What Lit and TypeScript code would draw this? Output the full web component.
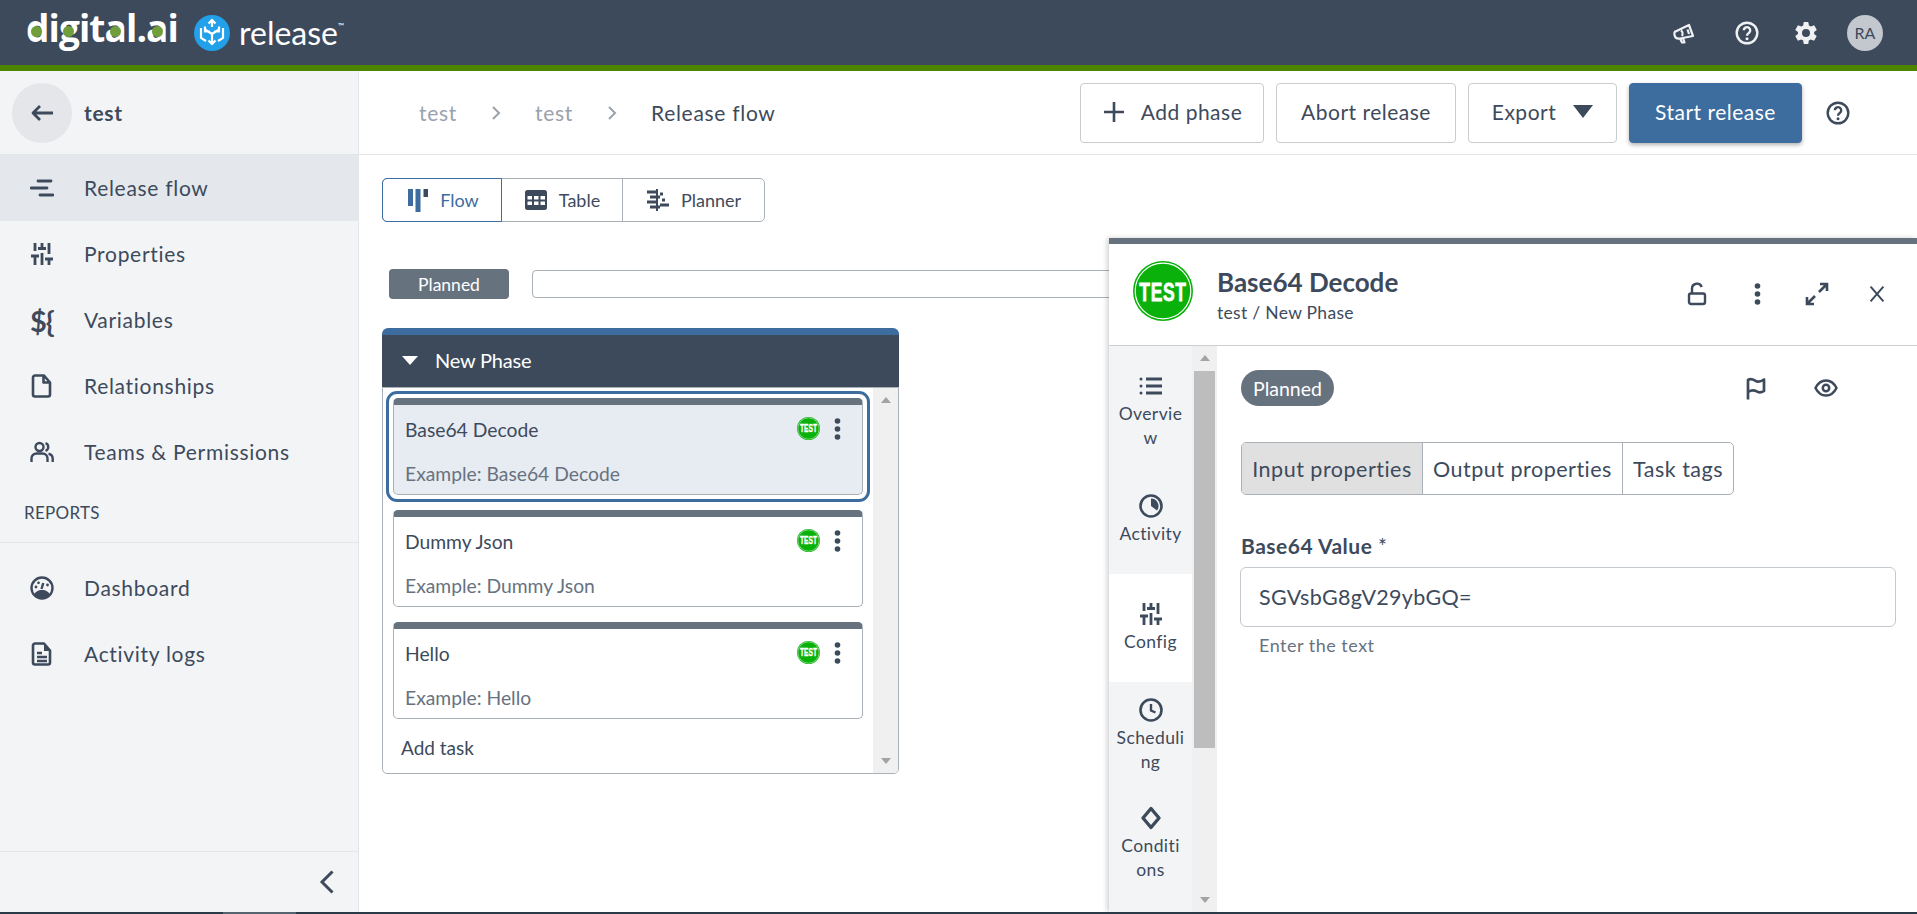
import { LitElement, html, css, svg } from "lit";
import { customElement } from "lit/decorators.js";

const icon = (body: unknown, size = 24) => html`<svg class="ic" width=${size} height=${size} viewBox="0 0 24 24">${body}</svg>`;

const sliders = svg`<path d="M5 1v8M5 14v9M12 1v5M12 11v12M19 1v11M19 17v6M1 14h8M8 6.500h8M15 17h8" fill="none" stroke="currentColor" stroke-width="2.800"/>`;
const clockFace = svg`<circle cx="12" cy="12" r="10.500" fill="none" stroke="currentColor" stroke-width="2.600"/>`;

const icons: Record<string, unknown> = {
  flow: svg`<path d="M8 5h13M1 12h16M10 19h13" fill="none" stroke="currentColor" stroke-width="2.800" stroke-linecap="round"/>`,
  sliders,
  file: svg`<path d="M5 1.500h9l6 7v12a2 2 0 0 1-2 2H5a2 2 0 0 1-2-2v-17a2 2 0 0 1 2-2zM13.500 2v6.500H20" fill="none" stroke="currentColor" stroke-width="2.600" stroke-linejoin="round"/>`,
  team: svg`<circle cx="9.500" cy="7" r="4" fill="none" stroke="currentColor" stroke-width="2.400"/><path d="M1.500 22v-3.500a5 5 0 0 1 5-5h6a5 5 0 0 1 5 5V22M15.500 3.200a4 4 0 0 1 0 7.600M18.500 13.700a5 5 0 0 1 4.200 4.800V22" fill="none" stroke="currentColor" stroke-width="2.400"/>`,
  gauge: svg`<circle cx="12" cy="12" r="10.500" fill="none" stroke="currentColor" stroke-width="2.400"/><path d="M4 19c1-3 4-5 8-5s7 2 8 5l-3 3H7z" fill="currentColor"/><path d="M11.500 13l1.800-6" stroke="currentColor" stroke-width="2.400"/><circle cx="6" cy="11" r="1.400" fill="currentColor"/><circle cx="8.500" cy="6.800" r="1.400" fill="currentColor"/><circle cx="17.500" cy="9" r="1.400" fill="currentColor"/>`,
  log: svg`<path d="M5 1.500h9l6 7v12a2 2 0 0 1-2 2H5a2 2 0 0 1-2-2v-17a2 2 0 0 1 2-2z" fill="none" stroke="currentColor" stroke-width="2.600" stroke-linejoin="round"/><path d="M7 11h5M7 15h10M7 19h10" stroke="currentColor" stroke-width="2.400"/><path d="M14 2l6 7h-6z" fill="currentColor"/>`,
  help: svg`<circle cx="12" cy="12" r="10.300" fill="none" stroke="currentColor" stroke-width="2.400"/><path d="M8.800 9.300a3.200 3.200 0 1 1 5 2.700c-1.200.8-1.800 1.300-1.800 2.700" fill="none" stroke="currentColor" stroke-width="2.400"/><circle cx="12" cy="17.800" r="1.500" fill="currentColor"/>`,
  gear: svg`<path fill="currentColor" fill-rule="evenodd" d="M20.100 13c.1-.3.100-.7.100-1s0-.7-.1-1l2.400-1.800c.2-.2.300-.5.100-.7l-2.300-3.900c-.1-.2-.4-.3-.7-.2l-2.800 1.100c-.6-.4-1.200-.8-1.900-1L14.400 1.500c0-.3-.3-.5-.5-.5h-3.800c-.3 0-.5.200-.5.500l-.4 3c-.7.200-1.300.6-1.900 1L4.500 4.400c-.3-.1-.5 0-.7.200L1.500 8.500c-.1.200-.1.500.1.700L4 11c-.1.300-.1.700-.1 1s0 .7.100 1l-2.400 1.800c-.2.200-.3.500-.1.700l2.300 3.900c.1.200.4.300.7.200l2.800-1.100c.6.400 1.200.8 1.900 1l.4 3c0 .3.200.5.500.5h3.800c.3 0 .5-.2.500-.5l.4-3c.7-.2 1.300-.6 1.900-1l2.800 1.100c.3.100.5 0 .7-.2l2.300-3.900c.1-.2.100-.5-.1-.7zM12 16a4 4 0 1 1 0-8 4 4 0 0 1 0 8z"/>`,
  horn: svg`<path d="M3.500 10.500L17 4l4 11-13 2.500c-3 .5-5-1-5.500-3.500-.3-1.500 0-2.800.5-3.500z M8 17.500l2 4h2.500l-1.500-4.500 M15.500 8.500l1.500 4.500M9 9.500c1.500 1 2 3.500 1 5.500" fill="none" stroke="currentColor" stroke-width="2.200" stroke-linejoin="round"/>`,
  plus: svg`<path d="M12 2v20M2 12h20" stroke="currentColor" stroke-width="2.600"/>`,
  lock: svg`<path d="M7 12V6.500a5 5 0 0 1 9.700-1.500" fill="none" stroke="currentColor" stroke-width="2.400"/><rect x="4" y="11.500" width="16" height="10.500" rx="2" fill="none" stroke="currentColor" stroke-width="2.400"/>`,
  expand: svg`<path d="M14 10l8-8M15 2h7v7M10 14l-8 8M2 15v7h7" fill="none" stroke="currentColor" stroke-width="2.600"/>`,
  close: svg`<path d="M5 4l14 16M19 4L5 20" stroke="currentColor" stroke-width="2.200"/>`,
  flag: svg`<path d="M4 23.500V4c4-2.500 7 1 9 1.500 2 .5 4 0 7-2V15c-3 2-6 1.500-8 0-3-1.500-5-1-8 1" fill="none" stroke="currentColor" stroke-width="2.700" stroke-linejoin="round"/>`,
  eye: svg`<path d="M1.500 12c2.500-5 6-7.500 10.500-7.500S20 7 22.500 12c-2.500 5-6 7.500-10.500 7.500S4 17 1.500 12z" fill="none" stroke="currentColor" stroke-width="2.500"/><circle cx="12" cy="12" r="3.200" fill="none" stroke="currentColor" stroke-width="2.500"/>`,
  list: svg`<path d="M7 5h16M7 12h16M7 19h16" stroke="currentColor" stroke-width="2.800"/><circle cx="2" cy="5" r="1.500" fill="currentColor"/><circle cx="2" cy="12" r="1.500" fill="currentColor"/><circle cx="2" cy="19" r="1.500" fill="currentColor"/>`,
  activity: svg`${clockFace}<path d="M12 4.500a7.500 7.500 0 0 1 6 12L12 12z" fill="currentColor"/>`,
  clock: svg`${clockFace}<path d="M12 6v6.500l4.500 2" fill="none" stroke="currentColor" stroke-width="2.400"/>`,
  diamond: svg`<path d="M12 2.500L20 12l-8 9.500L4 12z" fill="none" stroke="currentColor" stroke-width="3.400" stroke-linejoin="round"/>`,
  table: svg`<rect x="1" y="2" width="22" height="20" rx="2.500" fill="currentColor"/><path d="M3.500 8h4.500v3.500H3.500zM10 8h4.500v3.500H10zM16.500 8h4.500v3.500h-4.500zM3.500 13.500h4.500V17H3.500zM10 13.500h4.500V17H10zM16.500 13.500h4.500V17h-4.500z" fill="#fff"/>`,
  planner: svg`<path d="M11 1v22" stroke="currentColor" stroke-width="2"/><path d="M1 4h10M4 9h10M1 14h10M4 19h10M14 6h3M16 12h3M14 17h9" stroke="currentColor" stroke-width="2.800"/>`,
  columns: svg`<path d="M3 1h5v17H3zM10.500 1h5v23h-5z" fill="#3d6c9e"/><path d="M18.500 1H23v8h-4.500z" fill="#3d4a5c"/>`,
  back: svg`<path d="M23 12H3M10 5l-7 7 7 7" fill="none" stroke="currentColor" stroke-width="2.800" stroke-linejoin="round"/>`,
  chevron: svg`<path d="M17.500 1.500L7 12l10.500 10.500" fill="none" stroke="currentColor" stroke-width="3"/>`,
};

const dots = html`<svg class="ic" width="7" height="22" viewBox="0 0 7 22"><circle cx="3.500" cy="3" r="2.800" fill="currentColor"/><circle cx="3.500" cy="11" r="2.800" fill="currentColor"/><circle cx="3.500" cy="19" r="2.800" fill="currentColor"/></svg>`;

const crumbArrow = html`<svg class="ic" width="10" height="16" viewBox="0 0 10 16"><path d="M2 2l6 6-6 6" fill="none" stroke="#9aa2ac" stroke-width="2"/></svg>`;

const testBadge = (size: number) => html`<svg class="ic" width=${size} height=${size} viewBox="0 0 60 60">
  <circle cx="30" cy="30" r="30" fill="#0bb10b"/>
  <circle cx="30" cy="30" r="27.800" fill="none" stroke="#fff" stroke-width="1.200"/>
  <text transform="translate(30 39.500) scale(1 1.520)" text-anchor="middle" font-family="Liberation Sans" font-weight="700" font-size="17.500" fill="#fff" stroke="#fff" stroke-width="0.500">TEST</text>
</svg>`;

// letter, and where the green dot sits in its bowl (percent of the glyph width)
const logoLetters: [string, number?][] = [
  ["d", 45], ["i"], ["g", 47], ["i"], ["t"], ["a", 52], ["l"], ["."], ["a", 52], ["i"],
];

const mainNav = [
  { label: "Release flow", icon: "flow", active: true },
  { label: "Properties", icon: "sliders" },
  { label: "Variables", glyph: "\${" },
  { label: "Relationships", icon: "file" },
  { label: "Teams & Permissions", icon: "team" },
];
const reportNav = [
  { label: "Dashboard", icon: "gauge" },
  { label: "Activity logs", icon: "log" },
];
const tasks = [
  { name: "Base64 Decode", selected: true },
  { name: "Dummy Json" },
  { name: "Hello" },
];
// the narrow rail splits long words, the breaks are where the app puts them
const panelTabs = [
  { label: "Overvie\nw", icon: "list" },
  { label: "Activity", icon: "activity" },
  { label: "Config", icon: "sliders", active: true },
  { label: "Scheduli\nng", icon: "clock" },
  { label: "Conditi\nons", icon: "diamond" },
];

@customElement("app-root")
export class AppRoot extends LitElement {
  static styles = css`
    :host {
      --ink: #3d4a5c;
      --muted: #67727f;
      --line: #e3e5e8;
      --edge: #aab0b8;
      --blue: #3d6c9e;
      display: block;
      position: relative;
      width: 100%;
      height: 914px;
      overflow: hidden;
      background: #fff;
      color: var(--ink);
      font-family: Lato, sans-serif;
      font-size: 21px;
      letter-spacing: 0.7px;
    }
    .ic { display: block; flex: none; }

    .top {
      box-sizing: border-box;
      height: 71px;
      border-bottom: 6px solid #4e8500;
      background: var(--ink);
      color: #fff;
      display: flex;
      align-items: center;
      padding: 0 34px 0 26px;
    }
    .brand { align-self: flex-start; flex: none; width: 168px; font-family: "Open Sans", sans-serif; font-size: 37px; font-weight: 700; letter-spacing: -0.9px; line-height: 55px; white-space: nowrap; }
    .brand span { position: relative; display: inline-block; }
    .brand i { position: absolute; top: 26px; width: 11px; height: 11px; margin-left: -5.500px; border-radius: 50%; background: #6f9e3a; }
    .product { font-size: 32px; margin-left: 9px; letter-spacing: 0; }
    .tm { font-size: 8px; vertical-align: 16px; }
    .top-icons { margin-left: auto; display: flex; align-items: center; color: #f0f1f3; }
    .top-help { margin-left: 39px; }
    .top-gear { margin-left: 35px; }
    .avatar { width: 36px; height: 36px; margin-left: 29px; border-radius: 50%; background: #c3c7ce; color: var(--ink); font-size: 16px; letter-spacing: 0; display: flex; align-items: center; justify-content: center; }

    .page { display: flex; height: 843px; }
    .side {
      flex: none;
      box-sizing: border-box;
      width: 359px;
      border-right: 1px solid var(--line);
      background: #f3f4f6;
      display: flex;
      flex-direction: column;
    }
    .back { height: 83px; border-bottom: 1px solid var(--line); display: flex; align-items: center; padding-left: 12px; gap: 12px; font-weight: 700; }
    .circle { width: 60px; height: 60px; border-radius: 50%; background: #e5e6ea; display: flex; align-items: center; justify-content: center; }
    .row { height: 66px; display: flex; align-items: center; gap: 30px; padding-left: 30px; }
    .row span { margin-top: -2px; }
    .row.active { background: #e4e8ec; }
    .glyph { width: 24px; font-weight: 700; font-size: 29px; letter-spacing: -1px; white-space: nowrap; }
    .section { box-sizing: border-box; height: 58px; padding-left: 24px; padding-top: 17px; margin-bottom: 12px; border-bottom: 1px solid var(--line); font-size: 17px; letter-spacing: 0.3px; }
    .collapse { box-sizing: border-box; margin-top: auto; height: 63px; padding: 0 19px 3px 0; border-top: 1px solid var(--line); display: flex; align-items: center; justify-content: flex-end; }

    main { flex: 1; min-width: 0; }
    .bar { box-sizing: border-box; height: 84px; border-bottom: 1px solid var(--line); display: flex; align-items: center; padding: 0 67px 0 60px; }
    .crumb { display: flex; align-items: center; gap: 34px; }
    .crumb span { color: #9aa2ac; }
    .crumb b { font-weight: 400; }
    .actions { margin-left: auto; display: flex; align-items: center; gap: 12px; }
    .btn { box-sizing: border-box; height: 60px; padding-bottom: 2px; border: 1px solid #c9ccd1; border-radius: 4px; background: #fff; display: flex; align-items: center; justify-content: center; letter-spacing: 0.5px; }
    .btn.add { width: 184px; gap: 15px; }
    .btn.abort { width: 180px; }
    .btn.export { width: 149px; gap: 17px; }
    .btn.start { width: 173px; background: var(--blue); border-color: var(--blue); color: #fff; box-shadow: 0 2px 4px rgba(0, 0, 0, 0.3); }
    .caret { width: 0; height: 0; border: 10px solid transparent; border-top: 13px solid var(--ink); border-bottom: 0; }
    .help { margin-left: 12px; }

    .view { padding: 23px 0 0 23px; }
    .seg { display: flex; width: 383px; height: 44px; box-sizing: border-box; border: 1px solid var(--edge); border-radius: 5px; font-size: 18px; letter-spacing: 0; }
    .seg div { display: flex; align-items: center; justify-content: center; gap: 11px; }
    .seg .flow { width: 120px; margin: -1px 0 -1px -1px; border: 1px solid var(--blue); border-radius: 5px 0 0 5px; color: var(--blue); box-sizing: border-box; }
    .seg .table { width: 120px; }
    .seg .plan { flex: 1; border-left: 1px solid var(--edge); }
    .timeline { display: flex; gap: 23px; margin: 47px 0 0 7px; align-items: center; }
    .pill { flex: none; width: 120px; height: 30px; border-radius: 4px; background: var(--muted); color: #fff; font-size: 17.500px; letter-spacing: 0; display: flex; align-items: center; justify-content: center; }
    .track { flex: 1; box-sizing: border-box; height: 28px; border: 1px solid var(--edge); border-radius: 4px; margin-right: 60px; }

    .phase { width: 517px; margin-top: 29px; letter-spacing: 0; }
    .phase-head { box-sizing: border-box; height: 59px; padding: 0 0 3px 20px; border-top: 7px solid var(--blue); border-radius: 6px 6px 0 0; background: var(--ink); color: #fff; display: flex; align-items: center; gap: 17px; font-size: 20px; letter-spacing: -0.2px; }
    .tri { width: 0; height: 0; margin-top: 2px; border: 8px solid transparent; border-top: 9px solid #fff; border-bottom: 0; }
    .phase-body { box-sizing: border-box; height: 387px; border: 1px solid var(--edge); border-radius: 0 0 5px 5px; display: flex; overflow: hidden; }
    .list { flex: 1; min-width: 0; padding: 3px 3px 0; }
    .sel { border: 3px solid var(--blue); border-radius: 11px; padding: 4px; margin-bottom: 8px; }
    .card { box-sizing: border-box; height: 97px; border: 1px solid var(--edge); border-top: 7px solid var(--muted); border-radius: 5px; background: #fff; padding: 0 11px; margin: 0 7px 15px; }
    .sel .card { margin: 0; background: #e7ebf2; }
    .card-row { height: 48px; display: flex; align-items: center; gap: 14px; font-size: 19.300px; }
    .card-row span { flex: 1; }
    .card-row svg { margin-top: -2px; }
    .dots { margin-right: 10px; padding-top: 1px; }
    .card p { margin: 0; line-height: 42px; color: var(--muted); font-size: 19.300px; }
    .add-task { font-size: 19px; padding: 2px 0 0 15px; }

    .scroll { flex: none; box-sizing: border-box; background: #f0f0f0; display: flex; flex-direction: column; justify-content: space-between; align-items: center; padding: 9px 0; }
    .phase-body .scroll { width: 25px; }
    .up, .down { width: 0; height: 0; border: 5px solid transparent; }
    .up { border-bottom: 6px solid #a3a3a3; border-top: 0; }
    .down { border-top: 6px solid #a3a3a3; border-bottom: 0; }

    .panel {
      position: absolute;
      left: 1109px;
      right: 0;
      top: 238px;
      bottom: 2px;
      border-top: 6px solid var(--muted);
      background: #fff;
      box-shadow: -2px 0 5px rgba(0, 0, 0, 0.18);
      display: flex;
      flex-direction: column;
    }
    .panel-head { flex: none; box-sizing: border-box; height: 102px; border-bottom: 1px solid #ccced2; display: flex; align-items: center; padding: 0 10px 0 24px; }
    .panel-head > svg { margin-top: -8px; }
    .panel-title { margin-left: 24px; }
    .panel-title h1 { margin: 3px 0 0; font-size: 26px; font-weight: 700; line-height: 34px; letter-spacing: 0; }
    .panel-title small { display: block; font-size: 17.500px; line-height: 28px; letter-spacing: 0.3px; }
    .panel-tools { margin: -2px 0 0 auto; display: flex; align-items: center; }
    .panel-tools div { width: 60px; display: flex; justify-content: center; }
    .panel-body { flex: 1; display: flex; min-height: 0; }
    .rail { flex: none; width: 83px; background: #f3f4f6; padding-top: 12px; overflow: hidden; font-size: 17.500px; letter-spacing: 0.4px; }
    .tab { box-sizing: border-box; height: 108px; display: flex; flex-direction: column; align-items: center; justify-content: center; gap: 4px; text-align: center; white-space: pre-line; line-height: 24.500px; }
    .tab.active { background: #fff; }
    .rail-scroll { position: relative; width: 25px; }
    .thumb { position: absolute; left: 2px; right: 2px; top: 25px; height: 377px; background: #bdbdbd; }
    .content { flex: 1; padding: 24px 21px 0 24px; min-width: 0; }
    .status { display: flex; align-items: center; }
    .pillr { box-sizing: border-box; width: 93px; height: 36px; border-radius: 18px; background: var(--muted); color: #fff; font-size: 19.500px; letter-spacing: 0; display: flex; align-items: center; justify-content: center; }
    .flag { margin-left: auto; }
    .eye { margin: 0 58px 0 46px; }
    .tabs { display: inline-flex; height: 53px; margin-top: 36px; box-sizing: border-box; border: 1px solid var(--edge); border-radius: 5px; overflow: hidden; font-size: 21.500px; letter-spacing: 0.5px; }
    .tabs div { box-sizing: border-box; display: flex; align-items: center; justify-content: center; white-space: nowrap; border-left: 1px solid var(--edge); }
    .tabs .t1 { width: 180px; border-left: 0; background: #e0e0e0; }
    .tabs .t2 { width: 200px; }
    .tabs .t3 { width: 111px; }
    label { display: block; margin-top: 37px; font-weight: 700; font-size: 21px; line-height: 28px; letter-spacing: 0.5px; }
    label span { font-weight: 400; }
    .field { box-sizing: border-box; height: 60px; margin: 7px 0 0 -1px; border: 1px solid #c4c8cf; border-radius: 6px; display: flex; align-items: center; padding-left: 18px; font-size: 21.500px; letter-spacing: 0.3px; }
    .hint { margin: 7px 0 0 18px; color: var(--muted); font-size: 18px; letter-spacing: 0.5px; }
    .edge { position: absolute; left: 0; right: 0; bottom: 0; height: 2px; background: #2b3a47; }
    .edge i { display: block; width: 73px; height: 2px; margin-left: 223px; background: #56646f; }
  `;

  private navRow(item: { label: string; icon?: string; glyph?: string; active?: boolean }) {
    return html`<div class="row ${item.active ? "active" : ""}">
      ${item.glyph ? html`<div class="glyph">${item.glyph}</div>` : icon(icons[item.icon!])}
      <span>${item.label}</span>
    </div>`;
  }

  render() {
    return html`
      <header class="top">
        <div class="brand">${logoLetters.map(([ch, dot]) => html`<span>${ch}${dot ? html`<i style="left:${dot}%"></i>` : ""}</span>`)}</div>
        <svg class="ic" width="36" height="36" viewBox="0 0 36 36">
          <circle cx="18" cy="18" r="18" fill="#22a0ea"/>
          <path d="M18 19v9M14.500 25.500L18 29l3.500-3.500M18 19l-7-4.500M18 19l7-4.500M11 11.500v5h5M25 11.500v5h-5M18 5v7M14.500 8.500L18 5l3.500 3.500M7 13v10l5 3M29 13v10l-5 3" fill="none" stroke="#fff" stroke-width="2.200"/>
        </svg>
        <div class="product">release<span class="tm">™</span></div>
        <div class="top-icons">
          ${icon(icons.horn)}
          <div class="top-help">${icon(icons.help)}</div>
          <div class="top-gear">${icon(icons.gear)}</div>
          <div class="avatar">RA</div>
        </div>
      </header>

      <div class="page">
        <aside class="side">
          <div class="back"><div class="circle">${icon(icons.back)}</div>test</div>
          ${mainNav.map((n) => this.navRow(n))}
          <div class="section">REPORTS</div>
          ${reportNav.map((n) => this.navRow(n))}
          <div class="collapse">${icon(icons.chevron)}</div>
        </aside>

        <main>
          <div class="bar">
            <div class="crumb"><span>test</span>${crumbArrow}<span>test</span>${crumbArrow}<b>Release flow</b></div>
            <div class="actions">
              <div class="btn add">${icon(icons.plus)}Add phase</div>
              <div class="btn abort">Abort release</div>
              <div class="btn export">Export<div class="caret"></div></div>
              <div class="btn start">Start release</div>
              <div class="help">${icon(icons.help)}</div>
            </div>
          </div>
          <div class="view">
            <div class="seg">
              <div class="flow">${icon(icons.columns)}Flow</div>
              <div class="table">${icon(icons.table)}Table</div>
              <div class="plan">${icon(icons.planner)}Planner</div>
            </div>
            <div class="timeline"><div class="pill">Planned</div><div class="track"></div></div>
            <section class="phase">
              <div class="phase-head"><div class="tri"></div>New Phase</div>
              <div class="phase-body">
                <div class="list">
                  ${tasks.map((t) => {
                    const card = html`<div class="card">
                      <div class="card-row"><span>${t.name}</span>${testBadge(23)}<div class="dots">${dots}</div></div>
                      <p>Example: ${t.name}</p>
                    </div>`;
                    return t.selected ? html`<div class="sel">${card}</div>` : card;
                  })}
                  <div class="add-task">Add task</div>
                </div>
                <div class="scroll"><div class="up"></div><div class="down"></div></div>
              </div>
            </section>
          </div>
        </main>
      </div>

      <aside class="panel">
        <div class="panel-head">
          ${testBadge(60)}
          <div class="panel-title"><h1>Base64 Decode</h1><small>test / New Phase</small></div>
          <div class="panel-tools">
            <div>${icon(icons.lock)}</div>
            <div>${dots}</div>
            <div>${icon(icons.expand)}</div>
            <div>${icon(icons.close, 22)}</div>
          </div>
        </div>
        <div class="panel-body">
          <nav class="rail">
            ${panelTabs.map((t) => html`<div class="tab ${t.active ? "active" : ""}">${icon(icons[t.icon])}<span>${t.label}</span></div>`)}
          </nav>
          <div class="scroll rail-scroll"><div class="up"></div><div class="thumb"></div><div class="down"></div></div>
          <div class="content">
            <div class="status">
              <div class="pillr">Planned</div>
              <div class="flag">${icon(icons.flag)}</div>
              <div class="eye">${icon(icons.eye)}</div>
            </div>
            <div class="tabs"><div class="t1">Input properties</div><div class="t2">Output properties</div><div class="t3">Task tags</div></div>
            <label>Base64 Value <span>*</span></label>
            <div class="field">SGVsbG8gV29ybGQ=</div>
            <div class="hint">Enter the text</div>
          </div>
        </div>
      </aside>
      <div class="edge"><i></i></div>
    `;
  }
}
